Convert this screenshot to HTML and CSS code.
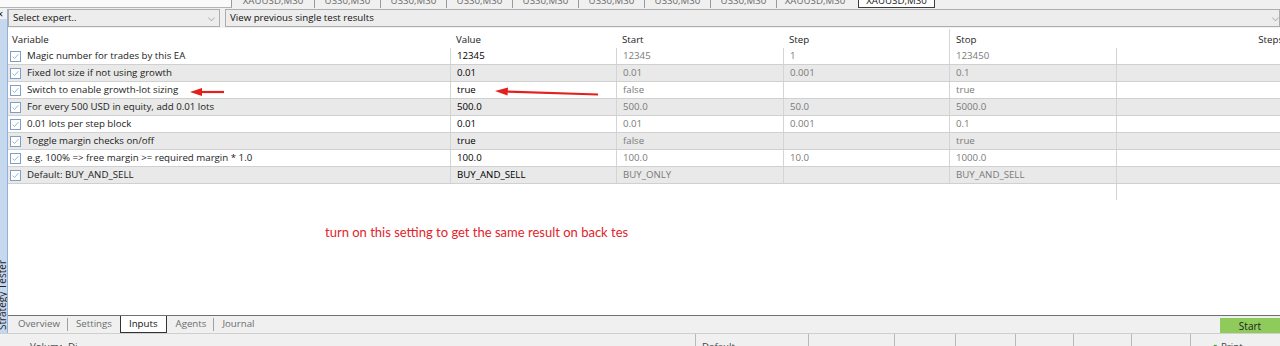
FILE: index.html
```html
<!DOCTYPE html>
<html lang="en">
<head>
    <meta charset="UTF-8">
    <title>Strategy Tester - Inputs</title>
    <link rel="stylesheet" href="styles.css">
</head>
<body>
    <div class="chart-tabs">
        <div class="chart-box"></div>
        <div class="chart-tab wide">XAUUSD,M30</div>
        <div class="chart-tab">US30,M30</div>
        <div class="chart-tab">US30,M30</div>
        <div class="chart-tab">US30,M30</div>
        <div class="chart-tab">US30,M30</div>
        <div class="chart-tab">US30,M30</div>
        <div class="chart-tab">US30,M30</div>
        <div class="chart-tab">US30,M30</div>
        <div class="chart-tab gold">XAUUSD,M30</div>
        <div class="chart-tab active">XAUUSD,M30</div>
    </div>

    <div class="frame">
        <div class="side-strip">
            <span class="close">×</span>
            <span class="side-title">Strategy Tester</span>
        </div>

        <div class="pane">
            <div class="toolbar">
                <div class="combo expert">Select expert..<span class="chev">⌵</span></div>
                <div class="combo history">View previous single test results<span class="chev">⌵</span></div>
            </div>

            <div class="params">
                <div class="row head">
                    <div class="cell">Variable</div>
                    <div class="cell">Value</div>
                    <div class="cell">Start</div>
                    <div class="cell">Step</div>
                    <div class="cell mark">Stop</div>
                    <div class="cell steps">Steps</div>
                </div>
                <!-- rows are filled by the script below -->
                <div id="rows"></div>
                <div class="row empty">
                    <div class="cell"></div><div class="cell"></div><div class="cell"></div>
                    <div class="cell"></div><div class="cell"></div><div class="cell last"></div>
                </div>

                <svg class="arrow" style="left:179px; top:58px" width="44" height="12" viewBox="0 0 44 12">
                    <path d="M37 6 L14 6" stroke="#e3201b" stroke-width="2.2"/>
                    <path d="M3 6 L15 2 L15 10 Z" fill="#e3201b"/>
                </svg>
                <svg class="arrow" style="left:484px; top:58px" width="112" height="12" viewBox="0 0 112 12">
                    <path d="M106 8.5 L14 5.5" stroke="#e3201b" stroke-width="2.2"/>
                    <path d="M3 5 L16 1.5 L15.5 9.5 Z" fill="#e3201b"/>
                </svg>
            </div>

            <div class="blank">
                <p class="note">turn on this setting to get the same result on back tes</p>
            </div>

            <div class="tabbar">
                <span class="tab">Overview</span>
                <span class="sep"></span>
                <span class="tab">Settings</span>
                <span class="tab current">Inputs</span>
                <span class="tab">Agents</span>
                <span class="sep"></span>
                <span class="tab">Journal</span>
                <button class="start">Start</button>
            </div>
        </div>
    </div>

    <div class="statusbar">
        <span class="stat s-volume">Volume</span>
        <span class="stat s-di">Di</span>
        <span class="stat s-default">Default</span>
        <span class="stat" style="width:86px"></span>
        <span class="stat" style="width:61px"></span>
        <span class="stat" style="width:60px"></span>
        <span class="stat" style="width:58px"></span>
        <span class="stat" style="width:58px"></span>
        <span class="stat" style="width:59px"></span>
        <span class="stat s-print"><span class="bar-icon">▮</span>Print</span>
    </div>

    <script>
        const inputs = [
            ['Magic number for trades by this EA', '12345', '12345', '1', '123450'],
            ['Fixed lot size if not using growth', '0.01', '0.01', '0.001', '0.1'],
            ['Switch to enable growth-lot sizing', 'true', 'false', '', 'true'],
            ['For every 500 USD in equity, add 0.01 lots', '500.0', '500.0', '50.0', '5000.0'],
            ['0.01 lots per step block', '0.01', '0.01', '0.001', '0.1'],
            ['Toggle margin checks on/off', 'true', 'false', '', 'true'],
            ['e.g. 100% => free margin >= required margin * 1.0', '100.0', '100.0', '10.0', '1000.0'],
            ['Default: BUY_AND_SELL', 'BUY_AND_SELL', 'BUY_ONLY', '', 'BUY_AND_SELL']
        ];

        const tick = '<svg class="check" width="11" height="11" viewBox="0 0 11 11">' +
            '<rect x="0.5" y="0.5" width="10" height="10" fill="#fff" stroke="#7f9fc8"/>' +
            '<path d="M2.6 5.6 L4.5 7.5 L8.4 3.2" fill="none" stroke="#9db4cf" stroke-width="1"/></svg>';

        let html = '';
        inputs.forEach((r, i) => {
            html += `<div class="row ${i % 2 ? 'alt' : ''}">
                <div class="cell name">${tick}<span>${r[0].replace(/>/g, '&gt;')}</span></div>
                <div class="cell value">${r[1]}</div>
                <div class="cell dim">${r[2]}</div>
                <div class="cell dim">${r[3]}</div>
                <div class="cell dim">${r[4]}</div>
                <div class="cell"></div>
            </div>`;
        });
        document.getElementById('rows').innerHTML = html;
    </script>
</body>
</html>
```

FILE: styles.css
```css
* {
    box-sizing: border-box;
}
html, body {
    margin: 0;
    height: 346px;
    overflow: hidden;
}
body {
    font-family: "Open Sans", "Noto Sans", sans-serif;
    font-size: 9.7px;
    color: #1b1b1b;
    background: #f0f0f0;
    display: flex;
    flex-direction: column;
}

/* chart tabs, only the lower edge is in view */
.chart-tabs {
    height: 9px;
    display: flex;
    overflow: hidden;
    background: #f0f0f0;
}
.chart-box {
    width: 232px;
    height: 8px;
    background: #fafafa;
    border-right: 1px solid #9a9a9a;
    border-bottom: 1px solid #b4b4b4;
}
.chart-tab {
    width: 66px;
    height: 14px;
    margin-top: -6px;
    line-height: 13px;
    text-align: center;
    color: #6a6a6a;
    border-right: 1px solid #9a9a9a;
}
.chart-tab.wide {
    width: 83px;
}
.chart-tab.gold {
    width: 76px;
    border-right: none;
}
.chart-tab.active {
    width: 77px;
    margin-left: 5px;
    background: #fff;
    color: #222;
    border: 1px solid #3c3c3c;
    border-top: none;
}

.frame {
    flex: 1;
    display: flex;
    min-height: 0;
}
.side-strip {
    width: 8px;
    background: #c6d8ee;
    border-right: 1px solid #94b0d4;
    overflow: hidden;
    display: flex;
    flex-direction: column;
    justify-content: space-between;
}
.close {
    font-size: 11px;
    line-height: 10px;
    margin-left: -3px;
    color: #111;
    background: #f0f0f0;
}
.side-title {
    writing-mode: vertical-rl;
    transform: rotate(180deg);
    font-size: 10px;
    line-height: 9px;
    margin-left: -2px;
    margin-bottom: 3px;
    white-space: nowrap;
    color: #222;
}

.pane {
    flex: 1;
    display: flex;
    flex-direction: column;
    background: #fff;
    min-width: 0;
}

.toolbar {
    display: flex;
    gap: 5px;
    height: 19px;
    background: #f0f0f0;
}
.combo {
    height: 18px;
    line-height: 16px;
    padding: 0 4px;
    background: #ededed;
    border: 1px solid #adadad;
    display: flex;
    justify-content: space-between;
    color: #111;
}
.combo.expert {
    width: 212px;
}
.combo.history {
    flex: 1;
    padding-right: 0;
}
.chev {
    font-size: 9px;
    color: #666;
}

.params {
    position: relative;
    padding-top: 1px;
}
.row {
    display: grid;
    grid-template-columns: 442px 166px 167px 166px 167px 1fr;
    height: 17px;
    border-bottom: 1px solid #d0d0d0;
    line-height: 16px;
}
.row.alt {
    background: #e9e9e9;
}
.row.head {
    height: 19px;
    line-height: 21px;
    border-bottom: none;
}
.row.empty {
    border-bottom: none;
    height: 16px;
}
.cell {
    padding-left: 6px;
    white-space: nowrap;
    overflow: hidden;
    border-left: 1px solid #d4d4d4;
}
.cell:first-child {
    border-left: none;
    padding-left: 4px;
}
.row.head .cell {
    border-left: none;
    color: #222;
}
.row.head .cell.mark {
    border-left: 1px solid #d4d4d4;
}
.row.head .cell.steps {
    text-align: right;
    overflow: visible;
    margin-right: -3px;
}
.row.empty .cell {
    border-left: none;
}
.row.empty .cell.last {
    border-left: 1px solid #d4d4d4;
}
.cell.name {
    display: flex;
    align-items: center;
    gap: 6px;
    padding-left: 2px;
}
.check {
    flex: none;
}
.cell.value {
    color: #000;
}
.cell.dim {
    color: #7a7a7a;
}
.arrow {
    position: absolute;
}

.blank {
    flex: 1;
    background: #fff;
}
.note {
    margin: 24px 0 0 317px;
    font-family: "Lato", "Open Sans", sans-serif;
    font-size: 13px;
    color: #e2232a;
}

.tabbar {
    height: 18px;
    display: flex;
    align-items: stretch;
    background: #f0f0f0;
    border-top: 1px solid #707070;
    padding-left: 10px;
    color: #6d6d6d;
}
.tab {
    padding: 0 7px 0 0;
    line-height: 16px;
}
.sep {
    width: 1px;
    background: #a0a0a0;
    margin: 2px 8px 2px 0;
}
.tab.current {
    background: #fff;
    color: #111;
    border: 1px solid #333;
    border-top: none;
    padding: 0 8px;
    margin: 0 9px 0 1px;
}
.start {
    margin-left: auto;
    width: 60px;
    height: 15px;
    margin-top: 2px;
    border: none;
    background: #8fcb5a;
    font-family: inherit;
    font-size: 10px;
    color: #1e1e1e;
    padding: 0;
}

.statusbar {
    height: 13px;
    display: flex;
    background: #f0f0f0;
    border-top: 1px solid #cfcfcf;
    overflow: hidden;
    color: #444;
}
.stat {
    line-height: 14px;
    padding-top: 6px;
    padding-left: 6px;
    border-left: 1px solid #b8b8b8;
    white-space: nowrap;
    overflow: hidden;
}
.s-volume {
    border-left: none;
    padding-left: 30px;
    width: 62px;
}
.s-di {
    border-left: none;
    width: 633px;
}
.s-default {
    width: 113px;
}
.s-print {
    flex: 1;
    padding-left: 22px;
}
.bar-icon {
    color: #3aa03a;
    font-size: 8px;
    margin-right: 4px;
}
```
